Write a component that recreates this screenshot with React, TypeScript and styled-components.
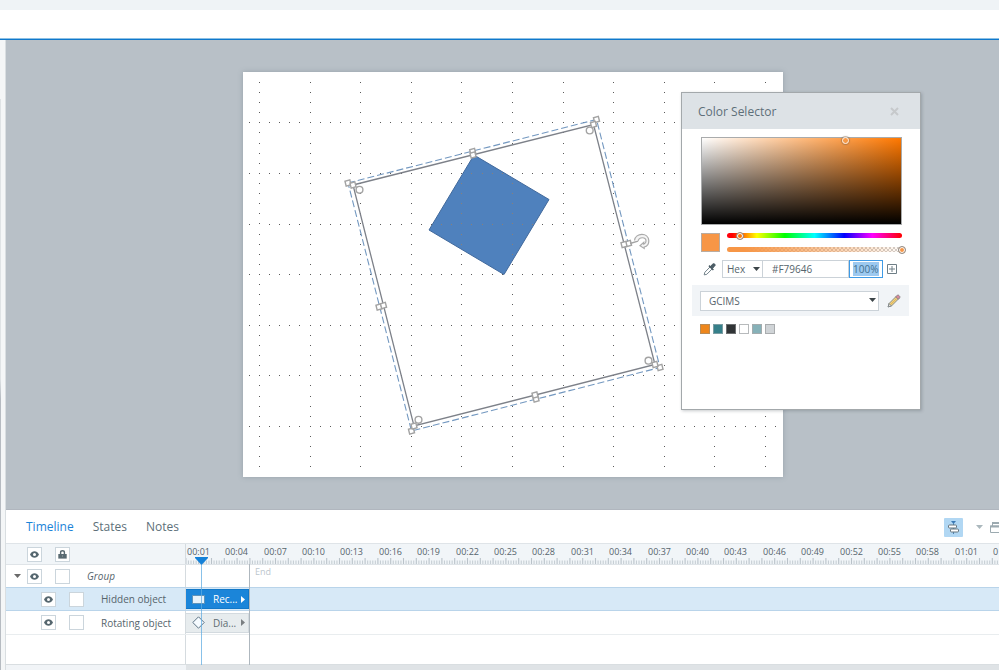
import React from "react";
import styled, { createGlobalStyle, css } from "styled-components";

const GlobalStyle = createGlobalStyle`
  *, *::before, *::after { box-sizing: border-box; }
  html, body, #root { height: 100%; }
  body {
    margin: 0;
    overflow: hidden;
    background: #ffffff;
    color: #56646c;
    font-family: "Open Sans", "Noto Sans", sans-serif;
    font-size: 10px;
    line-height: 14px;
  }
  button, input, select { font: inherit; color: inherit; }
`;

const Shell = styled.div`
  display: flex;
  flex-direction: column;
  height: 100vh;
`;

const TitleStrip = styled.div`
  flex: none;
  height: 10px;
  background: #eff3f6;
`;

const Toolbar = styled.header`
  flex: none;
  height: 30px;
  background: #ffffff;
  border-bottom: 1px solid #0f78cc;
  box-shadow: inset 0 -1px 0 #8cc0e4;
`;

const Body = styled.div`
  flex: 1;
  min-height: 0;
  display: flex;
`;

const Rail = styled.aside`
  flex: none;
  width: 6px;
  padding-top: 59px;
  background: #f4f6f7;
  border-right: 1px solid #d9dee1;
`;

const RailEdge = styled.div`
  width: 1px;
  height: 100%;
  background: linear-gradient(to bottom, #dfe3e5 280px, #b6bbc1 300px);
`;

const Main = styled.main`
  flex: 1;
  min-width: 0;
  display: flex;
  flex-direction: column;
`;

const Stage = styled.section`
  position: relative;
  flex: 1;
  min-height: 0;
  display: flex;
  justify-content: center;
  align-items: flex-start;
  padding: 32px 0 0 21px;
  background: #b8c0c7;
  overflow: hidden;
`;

const Slide = styled.div`
  display: flex;
  background: #ffffff;
  box-shadow: 0 0 5px rgba(90, 105, 118, 0.35);
`;

/* ---------- Color selector ---------- */

const Panel = styled.section`
  position: absolute;
  top: 52px;
  right: 78px;
  width: 240px;
  height: 318px;
  background: #ffffff;
  border: 1px solid #a3a8ab;
  box-shadow: 1px 1px 3px rgba(70, 80, 90, 0.3);
`;

const PanelHeader = styled.header`
  display: flex;
  align-items: center;
  justify-content: space-between;
  height: 36px;
  padding: 0 18px 0 16px;
  background: #dde2e6;
`;

const PanelTitle = styled.h2`
  margin: 0;
  padding-top: 1px;
  font-size: 12px;
  line-height: 18px;
  font-weight: 400;
  color: #5d6f79;
`;

const PlainButton = styled.button`
  display: flex;
  align-items: center;
  justify-content: center;
  flex: none;
  margin: 0;
  padding: 0;
  border: 0;
  background: transparent;
`;

const PanelBody = styled.div`
  display: flex;
  flex-direction: column;
  padding: 8px 11px 0 10px;
`;

const Shade = styled.div`
  position: relative;
  height: 88px;
  margin: 0 7px 0 9px;
  border: 1px solid #a9abac;
  background:
    linear-gradient(to bottom, transparent, #000000),
    linear-gradient(to right, #ffffff, #ff7800);
`;

const ShadeMarker = styled.span`
  position: absolute;
  top: -1px;
  left: 140px;
  width: 7px;
  height: 7px;
  border: 1px solid #fbf1ea;
  border-radius: 50%;
  box-shadow: 0 0 1px 1px rgba(130, 100, 70, 0.5);
`;

const SliderRow = styled.div`
  display: flex;
  gap: 7px;
  margin: 8px 7px 0 9px;
`;

const Swatch = styled.span`
  flex: none;
  width: 19px;
  height: 19px;
  background: #f79646;
  border: 1px solid #b9aca1;
`;

const Sliders = styled.div`
  flex: 1;
  min-width: 0;
  display: flex;
  flex-direction: column;
  gap: 9px;
`;

const Track = styled.div<{ $kind: "hue" | "alpha" }>`
  height: 5px;
  border-radius: 3px;
  ${(p) =>
    p.$kind === "hue"
      ? css`
          background: linear-gradient(to right, #ff0010, #ff0000 3%, #ffff00 17%, #00ff00 33%, #00ffff 50%, #0000ff 67%, #ff00ff 83%, #ff0000);
        `
      : css`
          background:
            linear-gradient(to right, #f79646 10%, rgba(247, 150, 70, 0.04)),
            repeating-conic-gradient(#cfcfcf 0% 25%, #ffffff 0% 50%) 0 0 / 4px 4px;
        `}
`;

const Range = styled.input<{ $fill: string }>`
  appearance: none;
  display: block;
  width: calc(100% + 8px);
  height: 9px;
  margin: 0 -4px;
  padding: 0;
  background: transparent;
  translate: 0 -2px;
  &::-webkit-slider-thumb {
    appearance: none;
    width: 8px;
    height: 8px;
    border-radius: 50%;
    border: 1px solid #8f8f8f;
    background: ${(p) => p.$fill};
    box-shadow: inset 0 0 0 1px #ffffff;
  }
`;

const ValueRow = styled.div`
  display: flex;
  align-items: center;
  height: 18px;
  margin: 8px 8px 0 11px;
`;

const SelectBox = styled.label<{ $wide?: boolean }>`
  position: relative;
  display: flex;
  flex: ${(p) => (p.$wide ? "1" : "none")};
  width: ${(p) => (p.$wide ? "auto" : "41px")};
  margin-left: ${(p) => (p.$wide ? "0" : "6px")};
  svg {
    position: absolute;
    right: 3px;
    top: 7px;
    pointer-events: none;
  }
`;

const Select = styled.select<{ $wide?: boolean }>`
  appearance: none;
  width: 100%;
  height: ${(p) => (p.$wide ? "20px" : "18px")};
  padding: 0 0 0 ${(p) => (p.$wide ? "8px" : "4px")};
  border: 1px solid #cbd2d8;
  border-radius: 0;
  background: #ffffff;
  outline: 0;
`;

const TextBox = styled.input<{ $active?: boolean }>`
  height: 18px;
  border: 1px solid #cbd2d8;
  border-left: 0;
  border-radius: 0;
  background: #ffffff;
  outline: 0;
  flex: 1;
  min-width: 0;
  padding: 0 0 0 9px;
  ${(p) =>
    p.$active &&
    css`
      flex: none;
      width: 34px;
      padding: 1px 3px;
      border: 1px solid #3f9be6;
      background: #9cc9f0 content-box;
      color: #42708f;
    `}
`;

const AddButton = styled(PlainButton)`
  width: 18px;
  height: 18px;
`;

const LibraryRow = styled.div`
  display: flex;
  align-items: center;
  gap: 8px;
  height: 31px;
  margin-top: 7px;
  padding: 0 8px;
  background: #f1f4f7;
`;

const SavedColors = styled.ul`
  display: flex;
  gap: 3px;
  margin: 8px 8px 0;
  padding: 0;
  list-style: none;
`;

const SavedColor = styled.button<{ $color: string; $edge: string }>`
  display: block;
  width: 10px;
  height: 10px;
  padding: 0;
  border: 1px solid ${(p) => p.$edge};
  background: ${(p) => p.$color};
`;

/* ---------- Timeline ---------- */

const Dock = styled.section`
  flex: none;
  background: #ffffff;
  border-top: 1px solid #b0b6be;
`;

const TabBar = styled.nav`
  display: flex;
  align-items: center;
  gap: 19px;
  height: 33px;
  padding: 1px 0 0 20px;
  overflow: hidden;
`;

const Tab = styled.button<{ $active?: boolean }>`
  flex: none;
  padding: 0;
  border: 0;
  background: transparent;
  font-size: 12px;
  line-height: 18px;
  color: ${(p) => (p.$active ? "#1b84d8" : "#5d6f79")};
`;

const DockTools = styled.div`
  display: flex;
  align-items: center;
  margin: 0 -4px 0 auto;
`;

const SnapButton = styled(PlainButton)`
  width: 19px;
  height: 19px;
  margin-right: 13px;
  background: #b1d7f3;
  border-radius: 1px;
`;

const Tracks = styled.div`
  position: relative;
`;

const Line = styled.div<{ $kind?: "head" | "group" | "selected" | "foot" }>`
  display: grid;
  grid-template-columns: 180px minmax(0, 1fr);
  height: ${(p) => (p.$kind === "head" || p.$kind === "group" ? 22 : 23)}px;
  ${(p) =>
    p.$kind === "head" &&
    css`
      background: #f1f5f8;
      border-top: 1px solid #dfe4e8;
      border-bottom: 1px solid #dfe4e8;
    `}
  ${(p) =>
    p.$kind === "selected" &&
    css`
      height: 24px;
      background: #d7e9f7;
      border-top: 1px solid #b9d4ea;
      border-bottom: 1px solid #b9d4ea;
    `}
  ${(p) =>
    p.$kind === "foot" &&
    css`
      height: 5px;
      background: #dfe3e6;
    `}
`;

const EmptyLine = styled(Line)`
  height: 31px;
  border-top: 1px solid #e9edef;
  border-bottom: 1px solid #d9dee1;
`;

const Names = styled.div<{ $depth?: number }>`
  display: flex;
  align-items: center;
  gap: 13px;
  padding-left: ${(p) => (p.$depth ? 35 : 21)}px;
  border-right: 1px solid #d5dbdf;
  min-width: 0;
`;

const FootNames = styled.div`
  background: #f1f4f7;
`;

const ToggleBox = styled(PlainButton)`
  width: 15px;
  height: 15px;
  border: 1px solid #cbd5dc;
  background: #ffffff;
`;

const LockCheck = styled.input`
  appearance: none;
  flex: none;
  width: 15px;
  height: 15px;
  margin: 0;
  border: 1px solid #cbd5dc;
  background: #ffffff;
`;

const Expander = styled(PlainButton)`
  width: 8px;
  height: 15px;
  margin: 0 -7px 0 -14px;
`;

const Label = styled.span<{ $italic?: boolean }>`
  margin-left: 4px;
  font-style: ${(p) => (p.$italic ? "italic" : "normal")};
  white-space: nowrap;
`;

const Lane = styled.div`
  display: flex;
  align-items: center;
  min-width: 0;
`;

const Clip = styled.button<{ $active?: boolean }>`
  display: flex;
  align-items: center;
  width: 63px;
  height: 20px;
  padding: 0 3px 0 6px;
  border: 1px solid ${(p) => (p.$active ? "#1278c8" : "#d3dadf")};
  border-left: 0;
  background: ${(p) => (p.$active ? "#1b85d9" : "#e7ecee")};
  color: ${(p) => (p.$active ? "#ffffff" : "#5f6c73")};
  span {
    flex: 1;
    margin-left: 8px;
    text-align: left;
  }
`;

const Ruler = styled.div`
  display: flex;
  flex-direction: column;
  min-width: 0;
  overflow: hidden;
`;

const RulerLabels = styled.div`
  display: grid;
  grid-template-columns: repeat(10, 38px 39px 38px 38px 39px);
  height: 14px;
  padding: 1px 0 0 1px;
  font-size: 9px;
`;

const EndLine = styled.div`
  position: absolute;
  top: 21px;
  bottom: 5px;
  left: 243px;
  padding: 1px 0 0 5px;
  border-left: 1px solid #aeb7be;
  color: #bcc6cd;
  font-size: 9px;
`;

const Playhead = styled.div`
  position: absolute;
  top: 14px;
  bottom: 5px;
  left: 189px;
  width: 13px;
  display: flex;
  flex-direction: column;
  align-items: center;
  &::after {
    content: "";
    flex: 1;
    width: 1px;
    background: rgba(96, 172, 226, 0.75);
  }
`;

const Caret = ({ color = "#3c4448" }: { color?: string }) => (
  <svg width="7" height="4" viewBox="0 0 7 4" aria-hidden="true">
    <path d="M0 0h7L3.5 4z" fill={color} />
  </svg>
);

const Play = ({ color }: { color: string }) => (
  <svg width="4" height="7" viewBox="0 0 4 7" aria-hidden="true">
    <path d="M0 0v7l4-3.5z" fill={color} />
  </svg>
);

const Eye = () => (
  <svg width="9" height="7" viewBox="0 0 9 7" aria-hidden="true">
    <path
      fillRule="evenodd"
      d="M0 3.5C1.2 1.3 2.6.2 4.5.2S7.8 1.3 9 3.5C7.8 5.7 6.4 6.8 4.5 6.8S1.2 5.7 0 3.5zM4.5 2a1.5 1.5 0 1 0 0 3a1.5 1.5 0 0 0 0-3z"
      fill="#56676f"
    />
  </svg>
);

const Lock = () => (
  <svg width="9" height="9" viewBox="0 0 9 9" aria-hidden="true">
    <path d="M2.6 4.5V2.500a1.900 1.700 0 0 1 3.800 0v2" fill="none" stroke="#596a72" strokeWidth="1.4" />
    <path d="M.3 4h8.400v4.600H.3z" fill="#596a72" />
    <path d="M4 5.300h1v1.400H4z" fill="#8a979d" />
  </svg>
);

const Dropper = () => (
  <svg width="13" height="13" viewBox="0 0 13 13" aria-hidden="true">
    <path d="M7 4L1.800 9.300l-.6 2.600 2.600-.6L9 6z" fill="#ffffff" stroke="#72828a" strokeWidth="1" />
    <path d="M6 2.600l4.400 4.400" stroke="#4c5d66" strokeWidth="1.6" />
    <path d="M7.400 3.800l2-2.500c.7-.9 1.700-.8 2.300-.2.600.6.600 1.600-.2 2.200L9.200 5.600z" fill="#4c5d66" stroke="#4c5d66" />
  </svg>
);

const PlusBox = () => (
  <svg width="10" height="10" viewBox="0 0 10 10" aria-hidden="true">
    <path d="M.5.5h9v9h-9zM5 2v6M2 5h6" fill="none" stroke="#6e7e86" />
  </svg>
);

const Pencil = () => (
  <svg width="14" height="14" viewBox="0 0 15 15" aria-hidden="true">
    <path d="M1.200 13.800l1-3.600L10.400 2l2.600 2.600-8.200 8.200z" fill="#f3d27c" stroke="#80868a" />
    <path d="M1.200 13.800l1-3.600 2.600 2.600z" fill="#e9e4d8" stroke="#80868a" />
    <path d="M9.300 3.100l1.700-1.700c.5-.5 1.200-.4 1.800.2l.7.700c.5.600.6 1.200.1 1.700l-1.700 1.700z" fill="#d8899a" stroke="#8a8288" />
    <path d="M4 11.200l6-6" stroke="#c9a24c" strokeWidth=".7" />
  </svg>
);

type Point = [number, number];

const innerHandles: Point[] = [
  [110, 113], [230, 83], [350.5, 52.5], [381, 172.5], [412, 292.5], [292, 323], [171, 354], [140.5, 233.5],
];
const outerHandles: Point[] = [
  [105, 111], [229.7, 79.5], [353.5, 47.5], [385.5, 171.5], [417, 295.5], [293, 327], [168.5, 359], [136, 235],
];
const roundHandles: Point[] = [
  [116.5, 117.8], [346.7, 58.5], [405.5, 288.7], [175.5, 347.8],
];

const corners = (pts: Point[]) => pts.filter((_, i) => i % 2 === 0).map((p) => p.join(",")).join(" ");

const gridDots: Point[] = [];
for (let c = 0; c < 11; c++) for (let j = 0; j < 39; j++) gridDots.push([16.4 + c * 50.6, 10.3 + j * 10.12]);
for (let r = 0; r < 7; r++)
  for (let i = 0; i < 53; i++) if (i % 5 !== 1) gridDots.push([6.3 + i * 10.12, 50.8 + r * 50.6]);

const onDiamond = ([x, y]: Point) => {
  const dx = x - 246;
  const dy = y - 142.7;
  const u = dx * 0.86 + dy * 0.51;
  const v = -dx * 0.51 + dy * 0.86;
  return Math.abs(u) < 43 && Math.abs(v) < 43;
};

const SlideArt = () => (
  <svg width="540" height="405" viewBox="0 0 540 405" role="img" aria-label="Slide">
    <polygon points="231,83 306,127.5 261,202.5 186,158" fill="#4f81bd" stroke="#41699c" />
    {gridDots.map((d, i) => (
      <rect
        key={i}
        x={Math.floor(d[0])}
        y={Math.floor(d[1])}
        width="1"
        height="1"
        fill={onDiamond(d) ? "#8a8078" : "#5a5a5a"}
      />
    ))}
    <polygon points={corners(innerHandles)} fill="none" stroke="#7d8189" strokeWidth="1.3" />
    <polygon points={corners(outerHandles)} fill="none" stroke="#7398c0" strokeWidth="1.1" strokeDasharray="7 3" />
    <g fill="#ffffff" stroke="#a3a3a3" strokeWidth="1.4">
      {[...outerHandles, ...innerHandles].map(([x, y], i) => (
        <rect key={i} x={x - 2.5} y={y - 2.5} width="5" height="5" transform={`rotate(-14 ${x} ${y})`} />
      ))}
      {roundHandles.map(([x, y], i) => (
        <circle key={i} cx={x} cy={y} r="3.4" />
      ))}
    </g>
    <path d="M387 171.500l8-2.300" stroke="#a3a3a3" strokeWidth="1.4" />
    <path
      d="M391.500 168.500c.8-8 14-8.500 14.300.2c.1 3.300-1.800 5.700-4.600 6.300v1.500l-4.200-2.800 3.800-3.400v1.800c1.400-.5 2.200-1.600 2.200-3.200c-.1-4.200-7-4.300-8 .2"
      fill="#f4f4f4"
      stroke="#aaaaaa"
      strokeWidth="1.200"
    />
  </svg>
);

const times = Array.from({ length: 22 }, (_, i) => {
  const s = 1 + i * 3;
  return `${String(Math.floor(s / 60)).padStart(2, "0")}:${String(s % 60).padStart(2, "0")}`;
});

const secondTicks = Array.from({ length: 160 }, (_, i) => `M${(i * 12.8 - 0.1).toFixed(2)} 0v6`).join("");
const minorTicks = Array.from({ length: 800 }, (_, i) => (i % 5 ? `M${(i * 2.56 - 0.1).toFixed(2)} 2.5v4` : "")).join("");

const Ticks = () => (
  <svg width="100%" height="6" aria-hidden="true">
    <path d={minorTicks} stroke="#c6ced4" strokeWidth="1.1" />
    <path d={secondTicks} stroke="#b9c2c9" strokeWidth="1.1" />
  </svg>
);

const palette = [
  ["Orange", "#ee861b", "#b98b55"],
  ["Teal", "#36808a", "#7b9da3"],
  ["Charcoal", "#303436", "#6c6f70"],
  ["White", "#ffffff", "#b7babc"],
  ["Light teal", "#86b1b8", "#a3abad"],
  ["Light gray", "#d0d4d7", "#a9acae"],
];

const ColorSelector = () => (
  <Panel aria-label="Color Selector">
    <PanelHeader>
      <PanelTitle>Color Selector</PanelTitle>
      <PlainButton aria-label="Close">
        <svg width="15" height="9" viewBox="0 0 15 9" aria-hidden="true">
          <path d="M4 1l7 7M11 1l-7 7" stroke="#c6c9cb" strokeWidth="2" />
        </svg>
      </PlainButton>
    </PanelHeader>
    <PanelBody>
      <Shade>
        <ShadeMarker />
      </Shade>
      <SliderRow>
        <Swatch />
        <Sliders>
          <Track $kind="hue">
            <Range type="range" min="0" max="360" defaultValue="26" aria-label="Hue" $fill="#ff7800" />
          </Track>
          <Track $kind="alpha">
            <Range type="range" min="0" max="100" defaultValue="100" aria-label="Opacity" $fill="#f79646" />
          </Track>
        </Sliders>
      </SliderRow>
      <ValueRow>
        <PlainButton aria-label="Pick color">
          <Dropper />
        </PlainButton>
        <SelectBox>
          <Select aria-label="Format" defaultValue="Hex">
            <option>Hex</option>
            <option>RGB</option>
          </Select>
          <Caret />
        </SelectBox>
        <TextBox aria-label="Color value" defaultValue="#F79646" />
        <TextBox aria-label="Opacity value" defaultValue="100%" $active />
        <AddButton aria-label="Add color">
          <PlusBox />
        </AddButton>
      </ValueRow>
      <LibraryRow>
        <SelectBox $wide>
          <Select aria-label="Color library" defaultValue="GCIMS" $wide>
            <option>GCIMS</option>
          </Select>
          <Caret />
        </SelectBox>
        <PlainButton aria-label="Edit library">
          <Pencil />
        </PlainButton>
      </LibraryRow>
      <SavedColors>
        {palette.map(([name, color, edge]) => (
          <li key={name}>
            <SavedColor aria-label={name} $color={color} $edge={edge} />
          </li>
        ))}
      </SavedColors>
    </PanelBody>
  </Panel>
);

const Timeline = () => (
  <Dock aria-label="Timeline">
    <TabBar>
      <Tab $active>Timeline</Tab>
      <Tab>States</Tab>
      <Tab>Notes</Tab>
      <DockTools>
        <SnapButton aria-label="Align to playhead">
          <svg width="13" height="13" viewBox="0 0 13 13" aria-hidden="true">
            <path d="M4 0h5L6.500 3z" fill="#3978b4" />
            <path d="M6.500 2v11" stroke="#4f84b5" />
            <rect x="1.500" y="4" width="8" height="3" rx="1" fill="#ffffff" stroke="#66747d" />
            <rect x="3.500" y="8" width="8" height="3" rx="1" fill="#ffffff" stroke="#66747d" />
          </svg>
        </SnapButton>
        <PlainButton aria-label="Options">
          <Caret color="#abb8bd" />
        </PlainButton>
        <PlainButton aria-label="Restore">
          <svg width="20" height="11" viewBox="0 0 20 11" aria-hidden="true">
            <path d="M9.500 4V.8h9V7H17M7.500 4h9v6.500h-9z" fill="none" stroke="#9caab0" />
            <path d="M9 1h10M7 4.500h10" stroke="#9caab0" strokeWidth="2" />
          </svg>
        </PlainButton>
      </DockTools>
    </TabBar>
    <Tracks>
      <Line $kind="head">
        <Names>
          <ToggleBox aria-label="Show or hide all">
            <Eye />
          </ToggleBox>
          <ToggleBox aria-label="Lock all">
            <Lock />
          </ToggleBox>
        </Names>
        <Ruler>
          <RulerLabels>
            {times.map((t) => (
              <span key={t}>{t}</span>
            ))}
          </RulerLabels>
          <Ticks />
        </Ruler>
      </Line>
      <Line $kind="group">
        <Names>
          <Expander aria-label="Collapse group">
            <Caret color="#6a6a6a" />
          </Expander>
          <ToggleBox aria-label="Show or hide Group">
            <Eye />
          </ToggleBox>
          <LockCheck type="checkbox" aria-label="Lock Group" />
          <Label $italic>Group</Label>
        </Names>
        <Lane />
      </Line>
      <Line $kind="selected">
        <Names $depth={1}>
          <ToggleBox aria-label="Show or hide Hidden object">
            <Eye />
          </ToggleBox>
          <LockCheck type="checkbox" aria-label="Lock Hidden object" />
          <Label>Hidden object</Label>
        </Names>
        <Lane>
          <Clip $active>
            <svg width="13" height="9" viewBox="0 0 13 9" aria-hidden="true">
              <path d="M.5.5h12v8H.5z" fill="#e6f2fb" stroke="#5f92b8" />
            </svg>
            <span>Rec...</span>
            <Play color="#ffffff" />
          </Clip>
        </Lane>
      </Line>
      <Line>
        <Names $depth={1}>
          <ToggleBox aria-label="Show or hide Rotating object">
            <Eye />
          </ToggleBox>
          <LockCheck type="checkbox" aria-label="Lock Rotating object" />
          <Label>Rotating object</Label>
        </Names>
        <Lane>
          <Clip>
            <svg width="13" height="13" viewBox="0 0 13 13" aria-hidden="true">
              <path d="M6.500.8l5.700 5.700-5.700 5.700L.8 6.500z" fill="#f6fbff" stroke="#5c7384" />
            </svg>
            <span>Dia...</span>
            <Play color="#7a7f82" />
          </Clip>
        </Lane>
      </Line>
      <EmptyLine>
        <Names />
        <Lane />
      </EmptyLine>
      <Line $kind="foot">
        <FootNames />
      </Line>
      <EndLine>End</EndLine>
      <Playhead>
        <svg width="13" height="8" viewBox="0 0 13 8" aria-hidden="true">
          <path d="M0 0h13v1L6.500 8 0 1z" fill="#1581d8" />
        </svg>
      </Playhead>
    </Tracks>
  </Dock>
);

export default function App() {
  return (
    <Shell>
      <GlobalStyle />
      <TitleStrip />
      <Toolbar />
      <Body>
        <Rail>
          <RailEdge />
        </Rail>
        <Main>
          <Stage>
            <Slide>
              <SlideArt />
            </Slide>
            <ColorSelector />
          </Stage>
          <Timeline />
        </Main>
      </Body>
    </Shell>
  );
}
